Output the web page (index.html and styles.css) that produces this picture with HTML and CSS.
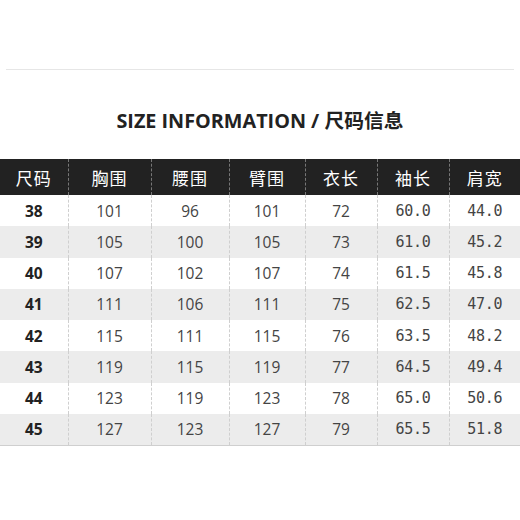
FILE: index.html
```html
<!DOCTYPE html>
<html>
<head>
<meta charset="utf-8">
<link rel="stylesheet" href="styles.css">
</head>
<body>
<div class="page">
  <div class="rule"></div>
  <h1 class="title">SIZE INFORMATION / 尺码信息</h1>
  <table class="size">
    <colgroup>
      <col style="width:68px"><col style="width:83px"><col style="width:78px"><col style="width:76px"><col style="width:72px"><col style="width:72px"><col style="width:71px">
    </colgroup>
    <thead>
      <tr><th>尺码</th><th>胸围</th><th>腰围</th><th>臂围</th><th>衣长</th><th>袖长</th><th>肩宽</th></tr>
    </thead>
    <tbody>
      <tr><td class="sz">38</td><td>101</td><td>96</td><td>101</td><td>72</td><td class="mono">60.0</td><td class="mono">44.0</td></tr>
      <tr><td class="sz">39</td><td>105</td><td>100</td><td>105</td><td>73</td><td class="mono">61.0</td><td class="mono">45.2</td></tr>
      <tr><td class="sz">40</td><td>107</td><td>102</td><td>107</td><td>74</td><td class="mono">61.5</td><td class="mono">45.8</td></tr>
      <tr><td class="sz">41</td><td>111</td><td>106</td><td>111</td><td>75</td><td class="mono">62.5</td><td class="mono">47.0</td></tr>
      <tr><td class="sz">42</td><td>115</td><td>111</td><td>115</td><td>76</td><td class="mono">63.5</td><td class="mono">48.2</td></tr>
      <tr><td class="sz">43</td><td>119</td><td>115</td><td>119</td><td>77</td><td class="mono">64.5</td><td class="mono">49.4</td></tr>
      <tr><td class="sz">44</td><td>123</td><td>119</td><td>123</td><td>78</td><td class="mono">65.0</td><td class="mono">50.6</td></tr>
      <tr><td class="sz">45</td><td>127</td><td>123</td><td>127</td><td>79</td><td class="mono">65.5</td><td class="mono">51.8</td></tr>
    </tbody>
  </table>
</div>
</body>
</html>
```
FILE: styles.css
```css
html, body {
  margin: 0;
  padding: 0;
  background: #fff;
}
.page {
  width: 520px;
  height: 520px;
  padding-top: 69px;
  box-sizing: border-box;
  font-family: "Open Sans", "Noto Sans CJK SC", sans-serif;
  color: #333;
}
.rule {
  height: 1px;
  margin: 0 6px 0 6px;
  background: #e6e6e6;
}
.title {
  margin: 38px 0 0 0;
  height: 26px;
  line-height: 26px;
  font-size: 19.8px;
  font-weight: 700;
  color: #222;
  text-align: center;
  letter-spacing: 0;
}
.size {
  margin-top: 25px;
  width: 520px;
  border-collapse: collapse;
  table-layout: fixed;
}
.size th {
  height: 36px;
  padding: 0;
  background: #222;
  color: #fff;
  font-family: "Noto Sans CJK SC", sans-serif;
  font-weight: 400;
  font-size: 17px;
  letter-spacing: 1px;
  border-left: 1px dashed #777;
}
.size td {
  height: 31.25px;
  padding: 0;
  text-align: center;
  font-family: "Open Sans", "Noto Sans CJK SC", sans-serif;
  font-size: 15.5px;
  color: #444;
  border-left: 1px dashed #cfcfcf;
}
.size th:first-child, .size td:first-child {
  border-left: none;
}
.size tbody tr:nth-child(even) td {
  background: #ececec;
}
.size tbody tr:last-child td {
  border-bottom: 1px solid #cfcfcf;
}
.size td.sz {
  font-weight: 700;
  color: #222;
}
.size td.mono {
  font-family: "DejaVu Sans Mono", monospace;
  font-size: 15px;
  letter-spacing: -0.3px;
}
```
